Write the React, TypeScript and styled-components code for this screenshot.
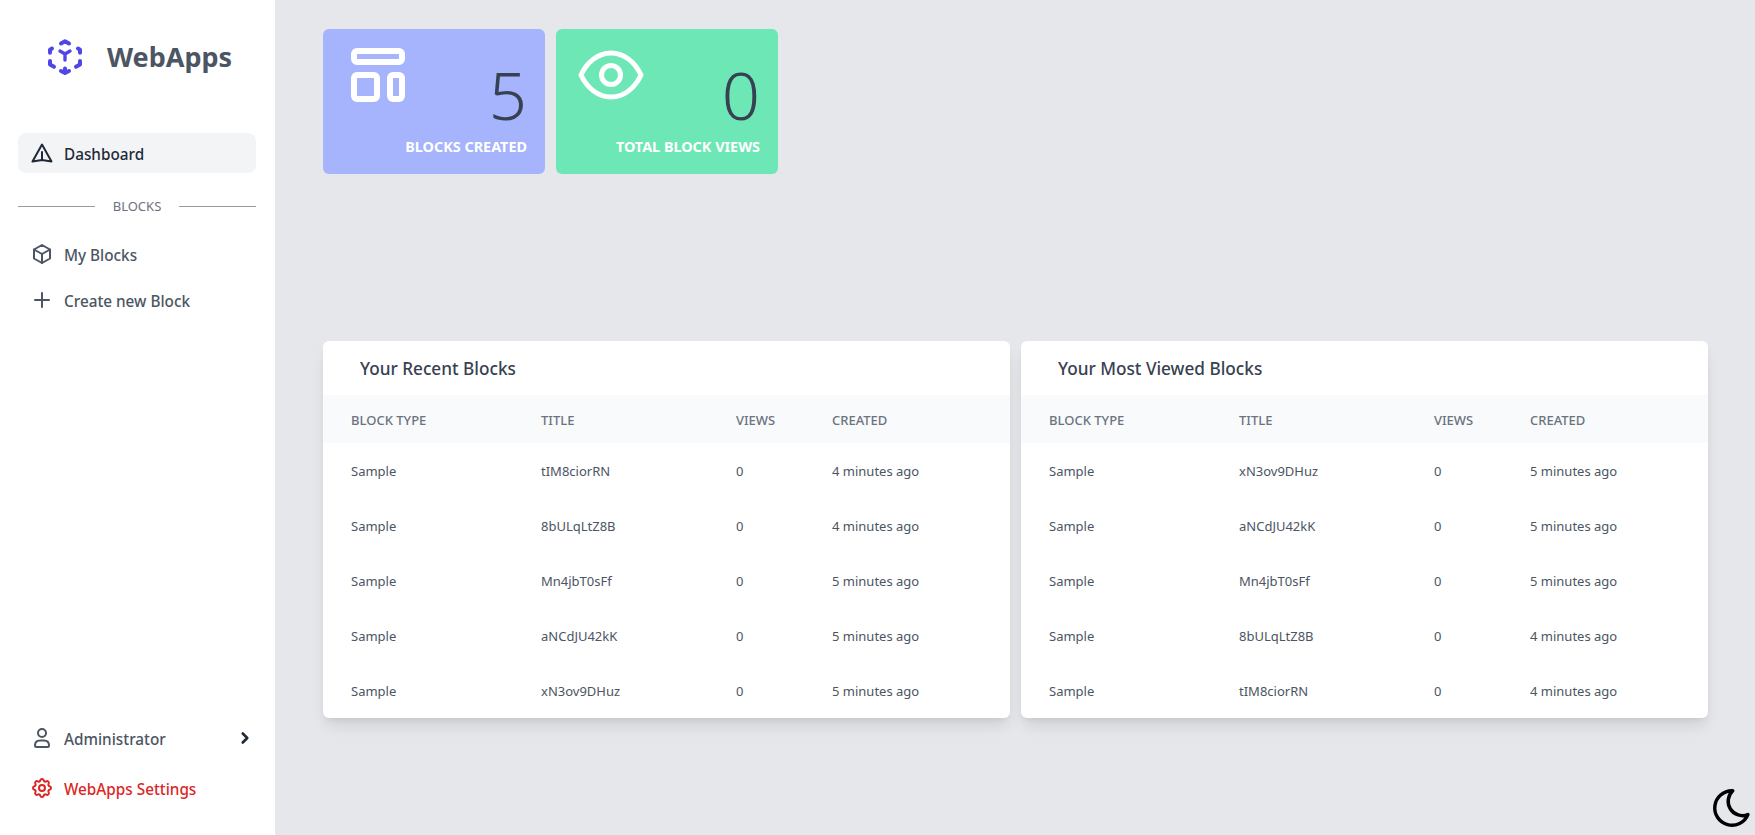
import styled, { createGlobalStyle } from 'styled-components';
import { TbBox, TbPlus, TbSettings, TbChevronRight, TbMoon } from 'react-icons/tb';

const GlobalStyle = createGlobalStyle`
  html, body {
    margin: 0;
    padding: 0;
    height: 100%;
    background: #e5e7eb;
    font-family: "Noto Sans", "Open Sans", sans-serif;
  }
  * { box-sizing: border-box; }
`;

const Shell = styled.div`
  display: flex;
  height: 835px;
  overflow: hidden;
  background: #e5e7eb;
`;

const Sidebar = styled.aside`
  width: 275px;
  flex-shrink: 0;
  background: #ffffff;
  display: flex;
  flex-direction: column;
  padding: 0 19px 0 18px;
`;

const Brand = styled.div`
  display: flex;
  align-items: center;
  height: 113px;
  padding-left: 28px;
  gap: 23px;
  color: #4b5563;
  font-size: 27px;
  font-weight: 700;
`;

const Nav = styled.nav`
  margin-top: 20px;
  display: flex;
  flex-direction: column;
`;

const NavGroup = styled.div`
  display: flex;
  flex-direction: column;
  gap: 6px;
  margin-top: -1px;
`;

const NavItem = styled.div<{ $active?: boolean; $danger?: boolean }>`
  display: flex;
  align-items: center;
  height: 40px;
  padding: 1px 12px 0;
  gap: 10px;
  font-size: 15.3px;
  border-radius: 8px;
  font-weight: 500;
  background: ${(p) => (p.$active ? '#f3f4f6' : 'transparent')};
  color: ${(p) => (p.$danger ? '#dc2626' : p.$active ? '#1f2937' : '#4b5563')};
  svg { flex-shrink: 0; margin-top: -1px; }
`;

const Chevron = styled.span`
  margin-left: auto;
  margin-right: -10px;
  display: flex;
  color: #1f2937;
`;

const Divider = styled.div`
  display: flex;
  align-items: center;
  gap: 18px;
  height: 20px;
  margin: 23px 0 19px;
  color: #6b7280;
  font-size: 13px;
  &::before, &::after {
    content: '';
    flex: 1;
    height: 1px;
    background: #9b9b9b;
  }
`;

const Spacer = styled.div`
  flex: 1;
`;

const BottomNav = styled.div`
  display: flex;
  flex-direction: column;
  gap: 10px;
  padding-bottom: 27px;
`;

const Main = styled.main`
  flex: 1;
  padding: 29px 47px 0 48px;
  position: relative;
`;

const Stats = styled.div`
  display: flex;
  gap: 11px;
`;

const StatCard = styled.div<{ $bg: string }>`
  position: relative;
  width: 222px;
  height: 145px;
  border-radius: 6px;
  background: ${(p) => p.$bg};
`;

const StatIcon = styled.div<{ $left: number; $top: number }>`
  position: absolute;
  left: ${(p) => p.$left}px;
  top: ${(p) => p.$top}px;
  display: flex;
`;

const StatValue = styled.div`
  position: absolute;
  right: 18px;
  top: 27px;
  font-size: 67px;
  line-height: 76px;
  font-weight: 350;
  color: #374151;
`;

const StatLabel = styled.div`
  position: absolute;
  right: 18px;
  bottom: 18px;
  font-size: 14.4px;
  font-weight: 700;
  color: #ffffff;
`;

const Tables = styled.div`
  display: flex;
  gap: 11px;
  margin-top: 167px;
`;

const Panel = styled.section`
  width: 687px;
  height: 377px;
  background: #ffffff;
  border-radius: 6px;
  overflow: hidden;
  box-shadow: 0 10px 15px -3px rgba(0, 0, 0, 0.1), 0 4px 6px -2px rgba(0, 0, 0, 0.05);
`;

const PanelTitle = styled.h2`
  margin: 0;
  height: 54px;
  padding: 1px 0 0 37px;
  display: flex;
  align-items: center;
  font-size: 17.2px;
  font-weight: 500;
  color: #374151;
`;

const Table = styled.table`
  width: 100%;
  border-collapse: collapse;
  table-layout: fixed;
`;

const HeadCell = styled.th<{ $w: number }>`
  width: ${(p) => p.$w}px;
  height: 48px;
  background: #f9fafb;
  padding: 1px 0 0 28px;
  text-align: left;
  font-size: 13px;
  font-weight: 500;
  color: #6b7280;
`;

const Cell = styled.td`
  height: 55px;
  padding: 1px 0 0 28px;
  font-size: 13px;
  color: #4b5563;
`;

const recent = [
  ['tIM8ciorRN', '4 minutes ago'],
  ['8bULqLtZ8B', '4 minutes ago'],
  ['Mn4jbT0sFf', '5 minutes ago'],
  ['aNCdJU42kK', '5 minutes ago'],
  ['xN3ov9DHuz', '5 minutes ago'],
];

const viewed = [
  ['xN3ov9DHuz', '5 minutes ago'],
  ['aNCdJU42kK', '5 minutes ago'],
  ['Mn4jbT0sFf', '5 minutes ago'],
  ['8bULqLtZ8B', '4 minutes ago'],
  ['tIM8ciorRN', '4 minutes ago'],
];

const Moon = styled.div`
  position: absolute;
  right: 0;
  bottom: 4px;
  display: flex;
  color: #000;
`;

const Logo = () => (
  <svg width="38" height="38" viewBox="0 0 38 38" fill="none" stroke="#4f46e5" strokeWidth="4" strokeLinecap="round" strokeLinejoin="round">
    <path d="M15 5.5l4-2.2 4 2.2" />
    <path d="M6 10.5l-2 1.2v3" fill="#4f46e5" />
    <path d="M32 10.5l2 1.2v3" fill="#4f46e5" />
    <path d="M4 23v3.5l4 2.3" />
    <path d="M34 23v3.5l-4 2.3" />
    <path d="M15 33l4 2 4-2M19 30.5v4" />
    <path d="M14 13l5 3 5-3M19 16v6" strokeWidth="3.4" />
  </svg>
);

const NavArrow = () => (
  <svg width="24" height="24" viewBox="0 0 24 24" fill="none" stroke="currentColor" strokeWidth="2" strokeLinejoin="round" strokeLinecap="round">
    <path d="M12 3.5L21.500 20.500L12 19L2.500 20.500Z" />
    <path d="M12 11V19" />
  </svg>
);

const UserIcon = () => (
  <svg width="24" height="24" viewBox="0 0 24 24" fill="none" stroke="currentColor" strokeWidth="2" strokeLinejoin="round">
    <circle cx="12" cy="7" r="4" />
    <path d="M5 19.500C5 16.500 7 14.500 10 14.500H14C17 14.500 19 16.500 19 19.500C19 20.500 18.500 21 17.500 21H6.500C5.500 21 5 20.500 5 19.500Z" />
  </svg>
);

const LayoutIcon = () => (
  <svg width="62" height="66" viewBox="0 0 62 66" fill="none" stroke="#fff" strokeWidth="6">
    <rect x="7" y="10" width="48" height="11" rx="3" />
    <rect x="7" y="34" width="23" height="24" rx="3" />
    <rect x="43" y="34" width="12" height="24" rx="3" />
  </svg>
);

const EyeIcon = () => (
  <svg width="66" height="50" viewBox="0 0 66 50" fill="none" stroke="#fff" strokeWidth="5" strokeLinecap="round" strokeLinejoin="round">
    <circle cx="33" cy="25" r="9.5" />
    <path d="M3 25C9 12 20 3 33 3s24 9 30 22c-6 13-17 22-30 22S9 38 3 25z" />
  </svg>
);

const BlockTable = ({ title, rows }: { title: string; rows: string[][] }) => (
  <Panel>
    <PanelTitle>{title}</PanelTitle>
    <Table>
      <thead>
        <tr>
          <HeadCell $w={190}>BLOCK TYPE</HeadCell>
          <HeadCell $w={195}>TITLE</HeadCell>
          <HeadCell $w={96}>VIEWS</HeadCell>
          <HeadCell $w={206}>CREATED</HeadCell>
        </tr>
      </thead>
      <tbody>
        {rows.map(([name, created]) => (
          <tr key={name}>
            <Cell>Sample</Cell>
            <Cell>{name}</Cell>
            <Cell>0</Cell>
            <Cell>{created}</Cell>
          </tr>
        ))}
      </tbody>
    </Table>
  </Panel>
);

const App = () => (
  <>
    <GlobalStyle />
    <Shell>
      <Sidebar>
        <Brand>
          <Logo />
          WebApps
        </Brand>
        <Nav>
          <NavItem $active>
            <NavArrow />
            Dashboard
          </NavItem>
          <Divider>BLOCKS</Divider>
          <NavGroup>
            <NavItem>
              <TbBox size={24} />
              My Blocks
            </NavItem>
            <NavItem>
              <TbPlus size={24} />
              Create new Block
            </NavItem>
          </NavGroup>
        </Nav>
        <Spacer />
        <BottomNav>
          <NavItem>
            <UserIcon />
            Administrator
            <Chevron>
              <TbChevronRight size={18} strokeWidth={3.5} />
            </Chevron>
          </NavItem>
          <NavItem $danger>
            <TbSettings size={24} />
            WebApps Settings
          </NavItem>
        </BottomNav>
      </Sidebar>
      <Main>
        <Stats>
          <StatCard $bg="#a5b4fc">
            <StatIcon $left={24} $top={12}>
              <LayoutIcon />
            </StatIcon>
            <StatValue>5</StatValue>
            <StatLabel>BLOCKS CREATED</StatLabel>
          </StatCard>
          <StatCard $bg="#6ee7b7">
            <StatIcon $left={22} $top={21}>
              <EyeIcon />
            </StatIcon>
            <StatValue>0</StatValue>
            <StatLabel>TOTAL BLOCK VIEWS</StatLabel>
          </StatCard>
        </Stats>
        <Tables>
          <BlockTable title="Your Recent Blocks" rows={recent} />
          <BlockTable title="Your Most Viewed Blocks" rows={viewed} />
        </Tables>
        <Moon>
          <TbMoon size={46} strokeWidth={1.8} />
        </Moon>
      </Main>
    </Shell>
  </>
);

export default App;
